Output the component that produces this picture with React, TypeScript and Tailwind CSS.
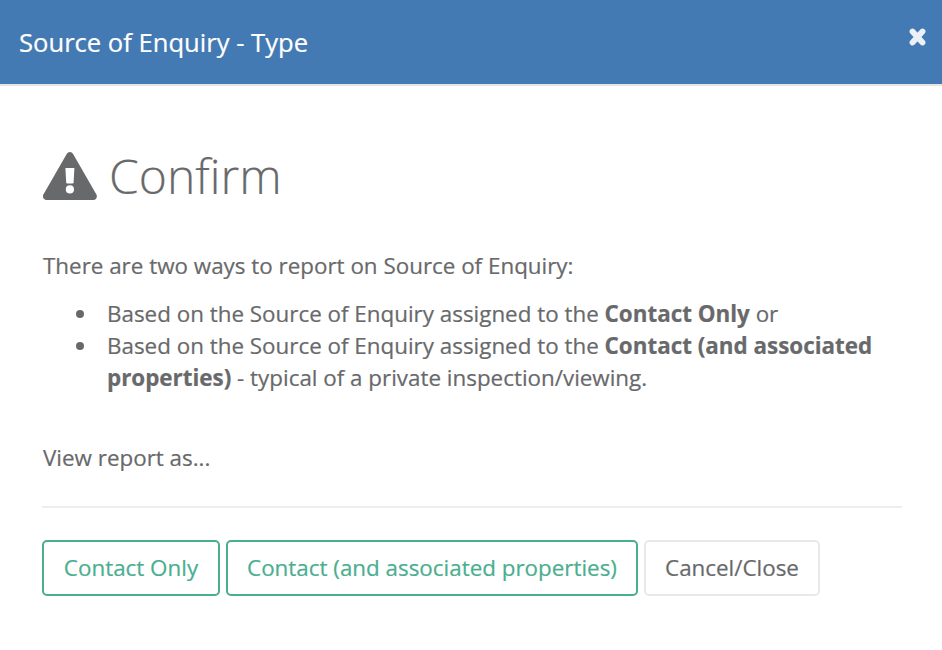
const outline = "h-14 rounded-[5px] border-2 text-[22.4px]";
const bullet =
  "relative before:absolute before:top-3 before:-left-[31px] before:h-2 before:w-2 before:rounded-full before:bg-[#68696b]";

function WarningIcon() {
  return (
    <svg width="55" height="48" viewBox="0 0 55 48" className="ml-px">
      <path
        fill="currentColor"
        fillRule="evenodd"
        d="M23.7 1.9a3.7 3.7 0 0 1 6.4 0L53.4 42.6c1.3 2.4-.3 5.4-3.1 5.4H3.5c-2.8 0-4.4-3-3.1-5.4zM22.4 16l.8 14.6c0 .6.5.9 1.1.9h5.2c.6 0 1.1-.3 1.1-.9l.8-14.6zM31 37.4a4.1 4.1 0 1 0-8.2 0 4.1 4.1 0 0 0 8.2 0z"
      />
    </svg>
  );
}

export default function App() {
  return (
    <div className="h-[650px] w-[942px] overflow-hidden bg-white font-['Open_Sans',sans-serif] text-[22.4px] leading-8 text-[#68696b] [-webkit-text-stroke:0.2px]">
      <header className="flex h-[86px] items-center justify-between border-b-2 border-[#e5e5e5] bg-[#447ab3] pr-4 pl-[19px] text-white">
        <h1 className="pt-0.5 text-[25.6px]">Source of Enquiry - Type</h1>
        <button type="button" aria-label="Close" className="-mt-2.5 text-[#ecf1f8]">
          <svg width="17" height="18" viewBox="0 0 17 18">
            <path d="M3.5 3.5l10 11M13.5 3.5l-10 11" stroke="currentColor" strokeWidth="5.8" strokeLinecap="round" />
          </svg>
        </button>
      </header>

      <main className="px-[42px] pt-[58px]">
        <div className="flex h-16 items-center gap-[11px]">
          <WarningIcon />
          <h2 className="text-[48px] font-light">Confirm</h2>
        </div>

        <p className="mt-[42px] pl-px">There are two ways to report on Source of Enquiry:</p>
        <ul className="mt-4 pl-[65px]">
          <li className={bullet}>
            Based on the Source of Enquiry assigned to the <b>Contact Only</b> or
          </li>
          <li className={bullet}>
            Based on the Source of Enquiry assigned to the <b>Contact (and associated properties)</b> - typical of a
            private inspection/viewing.
          </li>
        </ul>
        <p className="mt-12 pl-px">View report as...</p>

        <hr className="mt-8 w-[860px] border-t-2 border-[#eeeeee]" />

        <div className="mt-8 flex gap-1.5">
          <button type="button" className={`${outline} w-[178px] border-[#4bae90] text-[#4bae90]`}>
            Contact Only
          </button>
          <button type="button" className={`${outline} w-[412px] border-[#4bae90] text-[#4bae90]`}>
            Contact (and associated properties)
          </button>
          <button type="button" className={`${outline} w-[176px] border-[#e7eaec]`}>
            Cancel/Close
          </button>
        </div>
      </main>
    </div>
  );
}
